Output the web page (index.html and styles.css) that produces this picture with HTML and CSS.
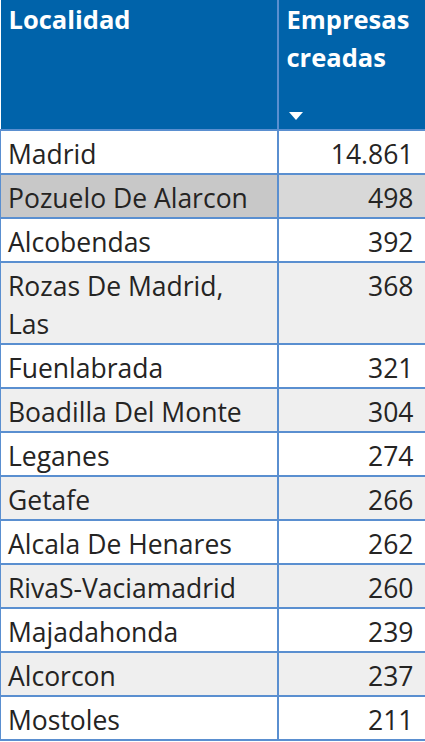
FILE: index.html
```html
<!DOCTYPE html>
<html lang="es">
<head>
<meta charset="utf-8">
<title>Empresas creadas</title>
<link rel="stylesheet" href="styles.css">
</head>
<body>
<table class="grid">
  <colgroup><col class="c-loc"><col class="c-num"></colgroup>
  <thead>
    <tr>
      <th><div class="hcell"><span>Localidad</span></div></th>
      <th><div class="hcell"><span>Empresas creadas</span><span class="sort"></span></div></th>
    </tr>
  </thead>
  <tbody>
    <tr><td>Madrid</td><td class="num">14.861</td></tr>
    <tr class="alt sel"><td>Pozuelo De Alarcon</td><td class="num">498</td></tr>
    <tr><td>Alcobendas</td><td class="num">392</td></tr>
    <tr class="alt"><td>Rozas De Madrid, Las</td><td class="num">368</td></tr>
    <tr><td>Fuenlabrada</td><td class="num">321</td></tr>
    <tr class="alt"><td>Boadilla Del Monte</td><td class="num">304</td></tr>
    <tr><td>Leganes</td><td class="num">274</td></tr>
    <tr class="alt"><td>Getafe</td><td class="num">266</td></tr>
    <tr><td>Alcala De Henares</td><td class="num">262</td></tr>
    <tr class="alt"><td>RivaS-Vaciamadrid</td><td class="num">260</td></tr>
    <tr><td>Majadahonda</td><td class="num">239</td></tr>
    <tr class="alt"><td>Alcorcon</td><td class="num">237</td></tr>
    <tr><td>Mostoles</td><td class="num">211</td></tr>
  </tbody>
</table>
</body>
</html>
```
FILE: styles.css
```css
html, body {
  margin: 0;
  padding: 0;
  background: #ffffff;
}
.grid {
  width: 425px;
  table-layout: fixed;
  border-collapse: collapse;
  font-family: "Open Sans", "Noto Sans", sans-serif;
  color: #252423;
}
.c-loc { width: 277px; }
.c-num { width: 148px; }
.grid th {
  background: #0063AA;
  color: #ffffff;
  font-weight: 700;
  font-size: 25.5px;
  line-height: 38px;
  text-align: left;
  vertical-align: top;
  padding: 0;
  border-left: 2px solid #5A8FD0;
  border-right: 2px solid #5A8FD0;
  border-bottom: 2px solid #5A8FD0;
}
.grid th:first-child { border-left: none; }
.hcell {
  height: 129px;
  display: flex;
  flex-direction: column;
  justify-content: space-between;
  padding: 0 6px 0 8px;
  box-sizing: border-box;
}
.sort {
  width: 0;
  height: 0;
  border-left: 7px solid transparent;
  border-right: 7px solid transparent;
  border-top: 8px solid #ffffff;
  margin: 0 0 9px 2px;
}
.grid td {
  font-size: 26.5px;
  line-height: 38px;
  padding: 4px 11px 0 7px;
  border: 2px solid #5A8FD0;
  vertical-align: top;
  background: #ffffff;
}
.grid td:first-child { border-left: 1px solid #5A8FD0; }
.grid tr.alt td { background: #EFEFEF; }
.grid tr.sel td:first-child { background: #C8C8C8; }
.grid tr.sel td.num { background: #D8D8D8; }
.num { text-align: right; }
```
